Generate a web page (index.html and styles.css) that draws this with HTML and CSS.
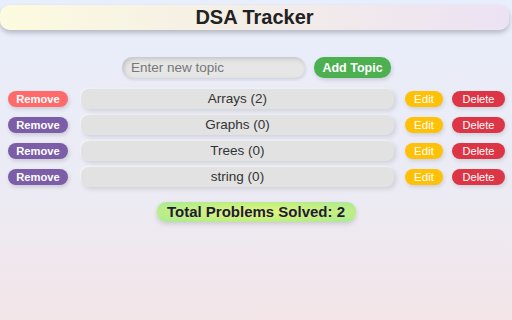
FILE: index.html
```html
<!DOCTYPE html>
<html lang="en">

<head>
    <meta charset="UTF-8">
    <meta name="viewport" content="width=device-width, initial-scale=1.0">
    <title>DSA Tracker</title>
    <link rel="stylesheet" href="styles.css">
</head>

<body>
    <!-- Header -->
    <div class="header">DSA Tracker</div>

    <!-- New topic form -->
    <div class="add-row">
        <input type="text" class="topic-input" placeholder="Enter new topic">
        <button class="add-btn">Add Topic</button>
    </div>

    <!-- Topic list -->
    <div class="topics">
        <div class="topic-row">
            <button class="remove-btn active">Remove</button>
            <div class="topic-name">Arrays (2)</div>
            <button class="edit-btn">Edit</button>
            <button class="delete-btn">Delete</button>
        </div>
        <div class="topic-row">
            <button class="remove-btn">Remove</button>
            <div class="topic-name">Graphs (0)</div>
            <button class="edit-btn">Edit</button>
            <button class="delete-btn">Delete</button>
        </div>
        <div class="topic-row">
            <button class="remove-btn">Remove</button>
            <div class="topic-name">Trees (0)</div>
            <button class="edit-btn">Edit</button>
            <button class="delete-btn">Delete</button>
        </div>
        <div class="topic-row">
            <button class="remove-btn">Remove</button>
            <div class="topic-name">string (0)</div>
            <button class="edit-btn">Edit</button>
            <button class="delete-btn">Delete</button>
        </div>
    </div>

    <!-- Total -->
    <div class="total-wrap">
        <div class="total">Total Problems Solved: 2</div>
    </div>
</body>

</html>
```

FILE: styles.css
```css
html {
    height: 100%;
}

body {
    margin: 0;
    padding: 5px 0 0 0;
    min-height: 100%;
    box-sizing: border-box;
    font-family: "Liberation Sans", Arial, sans-serif;
    background: linear-gradient(180deg, #e8eefb 0%, #ecebf4 60%, #f3e5e8 100%);
    overflow: hidden;
}

.header {
    margin-right: 3px;
    height: 25px;
    line-height: 25px;
    border-radius: 10px;
    background: linear-gradient(90deg, #fcfbdf 0%, #f3efe6 45%, #ece2f4 100%);
    box-shadow: 0 3px 5px rgba(0, 0, 0, 0.22);
    text-align: center;
    font-size: 20px;
    font-weight: bold;
    color: #222;
}

.add-row {
    display: flex;
    justify-content: center;
    gap: 9px;
    margin-top: 27px;
    padding-left: 1px;
}

.topic-input {
    width: 183px;
    height: 21px;
    box-sizing: border-box;
    border: none;
    border-radius: 10px;
    padding: 0 9px;
    background: #e6e6e6;
    box-shadow: inset 2px 2px 4px rgba(0, 0, 0, 0.15), 1px 2px 3px rgba(0, 0, 0, 0.1);
    font-family: inherit;
    font-size: 13.5px;
    color: #333;
    outline: none;
}

.topic-input::placeholder {
    color: #777;
}

.add-btn {
    width: 77px;
    height: 21px;
    border: none;
    border-radius: 10px;
    background: #4caf50;
    color: #fff;
    font-family: inherit;
    font-size: 12.5px;
    font-weight: bold;
    padding: 0;
    box-shadow: 1px 2px 4px rgba(0, 0, 0, 0.15);
}

.topics {
    margin-top: 11px;
    display: flex;
    flex-direction: column;
    gap: 6px;
}

.topic-row {
    display: flex;
    align-items: center;
    height: 20px;
    padding-left: 8px;
}

.remove-btn {
    width: 60px;
    height: 16px;
    border: none;
    border-radius: 8px;
    background: #7b5ea7;
    color: #fff;
    font-family: inherit;
    font-size: 11.2px;
    font-weight: bold;
    padding: 0;
    box-shadow: 1px 2px 4px rgba(0, 0, 0, 0.15);
}

.remove-btn.active {
    background: #ff6b6b;
}

.topic-name {
    margin-left: 13px;
    width: 313px;
    height: 20px;
    line-height: 20px;
    border-radius: 8px;
    background: #e2e2e2;
    box-shadow: 2px 2px 5px rgba(0, 0, 0, 0.12), -1px -1px 2px rgba(255, 255, 255, 0.6);
    text-align: center;
    font-size: 13.5px;
    color: #333;
}

.edit-btn {
    margin-left: 11px;
    width: 38px;
    height: 16px;
    border: none;
    border-radius: 8px;
    background: #ffc107;
    color: #fff;
    font-family: inherit;
    font-size: 11.5px;
    padding: 0;
    box-shadow: 1px 2px 4px rgba(0, 0, 0, 0.12);
}

.delete-btn {
    margin-left: 9px;
    width: 53px;
    height: 16px;
    border: none;
    border-radius: 8px;
    background: #dc3545;
    color: #fff;
    font-family: inherit;
    font-size: 11px;
    padding: 0;
    box-shadow: 1px 2px 4px rgba(0, 0, 0, 0.12);
}

.total-wrap {
    display: flex;
    justify-content: center;
    margin-top: 15px;
}

.total {
    width: 199px;
    height: 20px;
    line-height: 20px;
    border-radius: 9px;
    background: radial-gradient(ellipse at center, #e6f57c 0%, #c8f07e 50%, #a6e99a 100%);
    box-shadow: 0 2px 5px rgba(0, 0, 0, 0.15);
    text-align: center;
    font-size: 15px;
    font-weight: bold;
    color: #1c1c3a;
}
```
